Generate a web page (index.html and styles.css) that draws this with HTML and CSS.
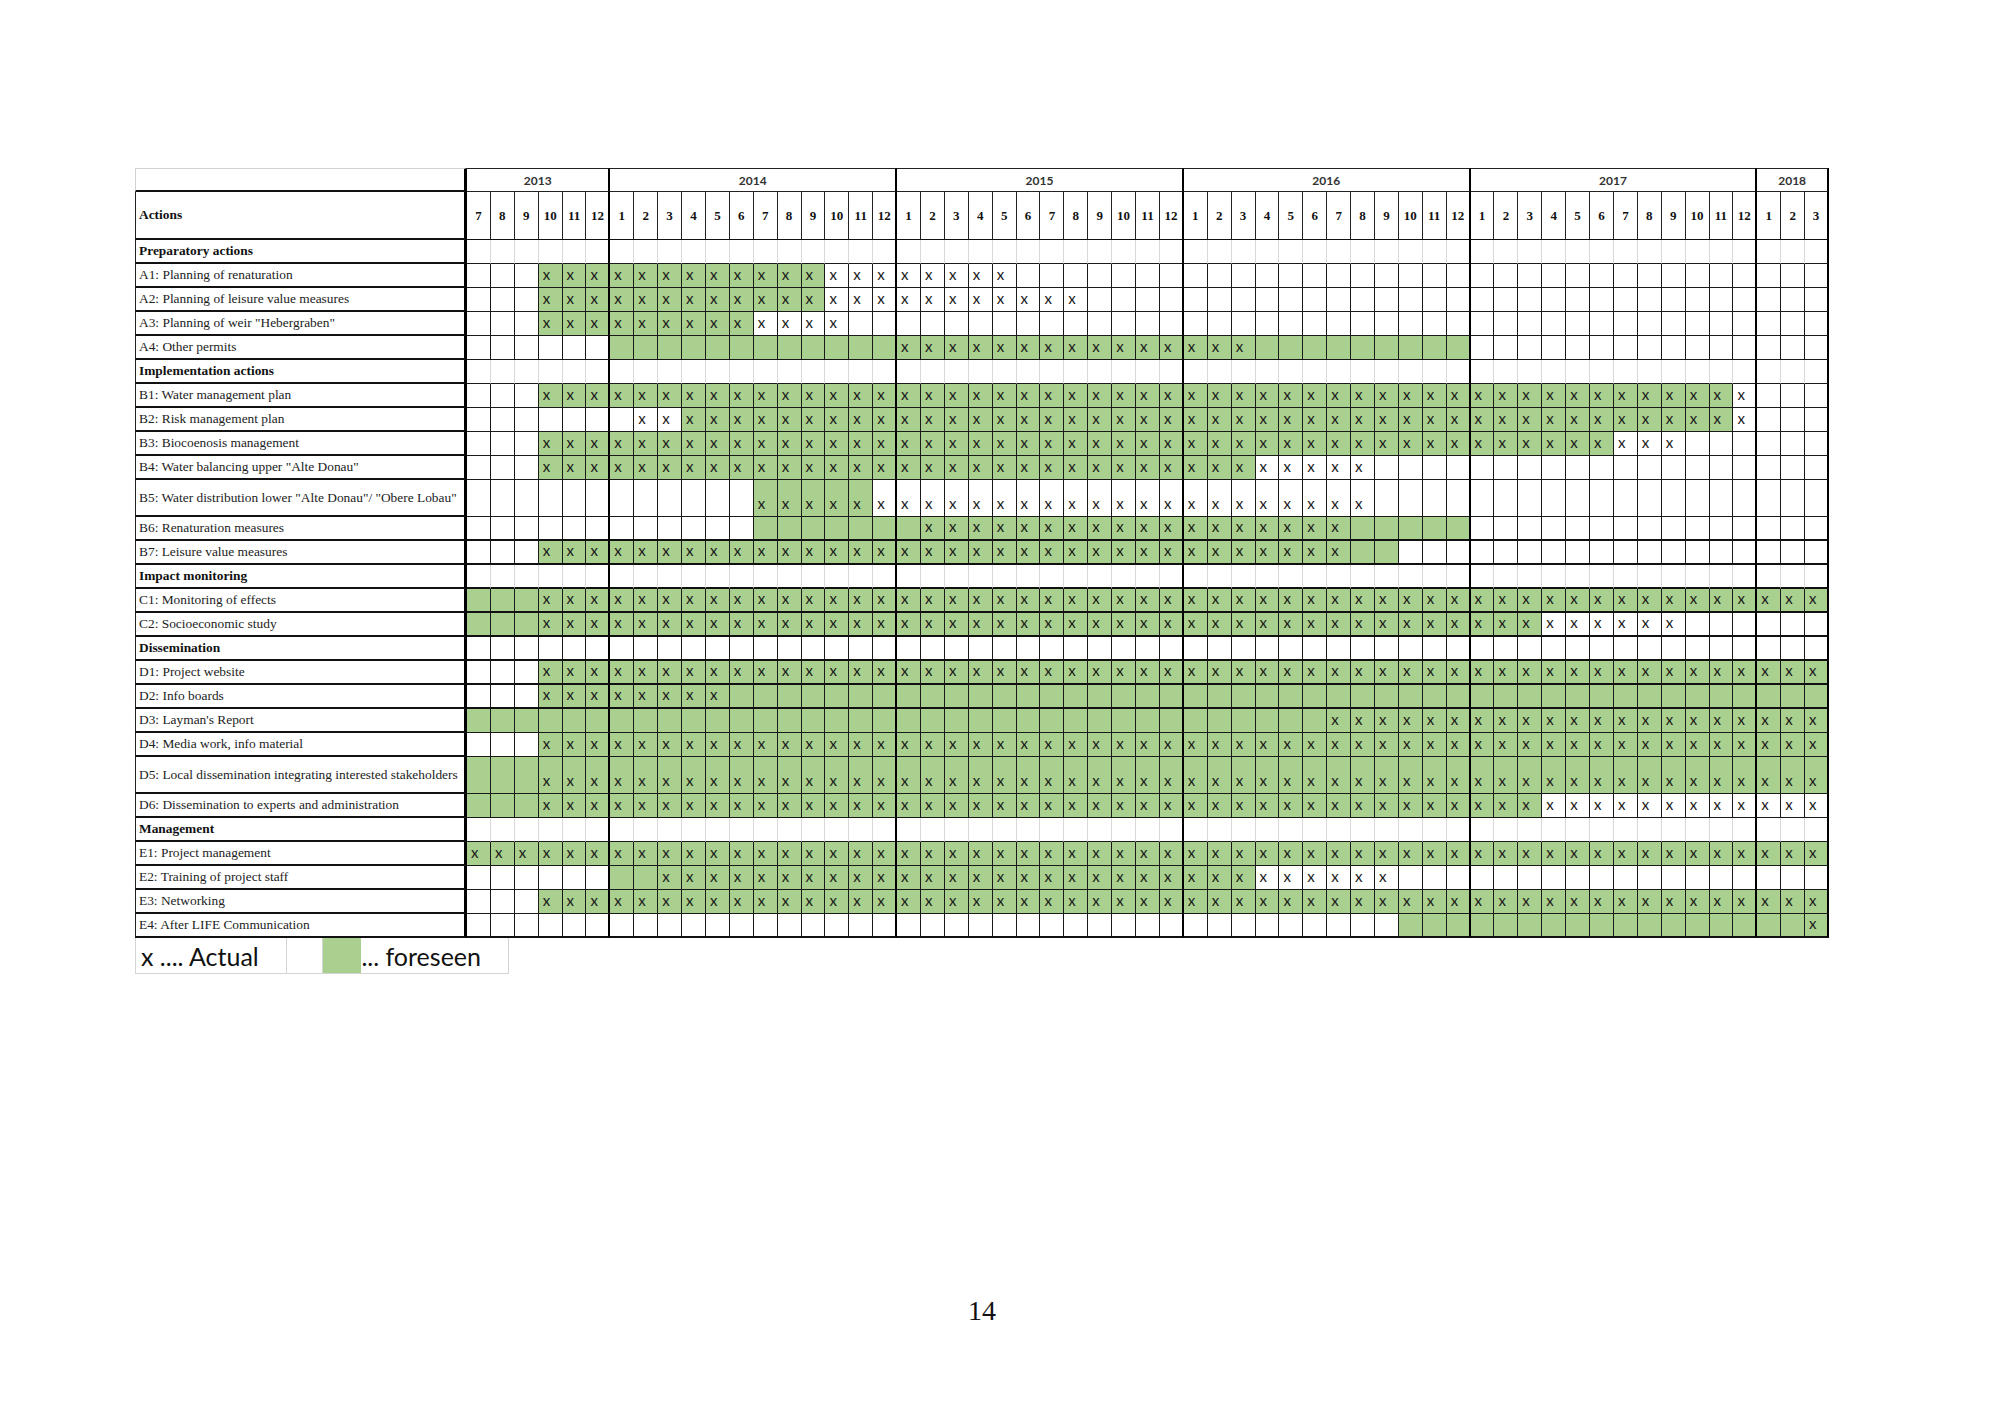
FILE: index.html
```html
<!DOCTYPE html>
<html lang="en">
<head>
<meta charset="utf-8">
<title>Time table</title>
<link rel="stylesheet" href="styles.css">
</head>
<body>
<div class="page">
  <div class="chart" id="chart">
    <div class="row hy">
      <div class="lab corner"></div>
      <div class="yr s6">2013</div>
      <div class="yr">2014</div>
      <div class="yr">2015</div>
      <div class="yr">2016</div>
      <div class="yr">2017</div>
      <div class="yr s3">2018</div>
    </div>
    <div class="row hm" id="monthRow">
      <div class="lab head">Actions</div>
    </div>
  </div>
  <div class="legend">
    <div class="lg1">x .... Actual</div>
    <div class="lg2"></div>
    <div class="lg3"></div>
    <div class="lg4">... foreseen</div>
  </div>
  <div class="pnum">14</div>
</div>
<script src="script.js"></script>
</body>
</html>
```

FILE: styles.css
```css
body {
  margin: 0;
  background: #fff;
}
.page {
  width: 2000px;
  height: 1414px;
  box-sizing: border-box;
  padding: 168px 0 0 135px;
}
.chart {
  width: 1694px;
}
.row {
  display: grid;
  grid-template-columns: 332px repeat(57, minmax(0, 1fr));
  height: 24px;
}
.row.hm {
  height: 48px;
}
.row.tall {
  height: 37px;
}
.lab {
  box-sizing: border-box;
  border-left: 1px solid #222;
  border-right: 3px solid #000;
  border-bottom: 2px solid #111;
  display: flex;
  align-items: center;
  padding-left: 3px;
  font-family: "Liberation Serif", "Times New Roman", serif;
  font-size: 13.4px;
  color: #222;
  white-space: nowrap;
  overflow: hidden;
}
.lab.corner {
  border-top: 1px solid #d2d2d2;
  border-left: 1px solid #d2d2d2;
}
.lab.head,
.sec .lab {
  font-weight: bold;
  color: #111;
}
.yr {
  grid-column: span 12;
  box-sizing: border-box;
  border-top: 1px solid #222;
  border-right: 2px solid #000;
  border-bottom: 1px solid #222;
  display: flex;
  align-items: center;
  justify-content: center;
  font-family: Lato, "Liberation Sans", sans-serif;
  font-weight: bold;
  font-size: 12px;
  color: #333;
}
.yr.s6 {
  grid-column: span 6;
}
.yr.s3 {
  grid-column: span 3;
}
.mo {
  box-sizing: border-box;
  border-right: 1px solid #222;
  border-bottom: 1px solid #111;
  display: flex;
  align-items: center;
  justify-content: center;
  font-family: "Liberation Serif", "Times New Roman", serif;
  font-weight: bold;
  font-size: 13px;
  color: #111;
}
.mo.ye {
  border-right: 2px solid #000;
}
.cell {
  box-sizing: border-box;
  border-right: 1px solid #1a1a1a;
  border-bottom: 1px solid #1a1a1a;
  display: flex;
  align-items: flex-end;
  padding: 0 0 5px 4px;
  font-family: Lato, "Liberation Sans", sans-serif;
  font-size: 15px;
  line-height: 1;
  color: #1a1a1a;
}
.cell.g {
  background: #a9d08e;
}
.cell.ye {
  border-right: 2px solid #000;
}
.thick .cell {
  border-bottom: 2px solid #111;
}
.sec .cell {
  border-right-color: #d9d9d9;
}
.sec .cell.ye {
  border-right-color: #000;
}
.sec.dk .cell {
  border-right-color: #1a1a1a;
}
.sec.dk .cell.ye {
  border-right-color: #000;
}
.legend {
  display: flex;
  width: 374px;
  height: 36px;
  box-sizing: border-box;
  border-left: 1px solid #d4d4d4;
  border-bottom: 1px solid #d4d4d4;
}
.legend div {
  box-sizing: border-box;
  border-right: 1px solid #d4d4d4;
  display: flex;
  align-items: center;
  font-family: Lato, "Liberation Sans", sans-serif;
  font-size: 25px;
  color: #111;
  white-space: nowrap;
}
.lg1 {
  width: 151px;
  padding-left: 5px;
}
.lg2 {
  width: 36px;
}
.lg3 {
  width: 39px;
  background: #a9d08e;
  border-right: none !important;
}
.lg4 {
  width: 148px;
  padding-left: 0;
}
.pnum {
  width: 1694px;
  margin-top: 321px;
  text-align: center;
  font-family: "Liberation Serif", "Times New Roman", serif;
  font-size: 28px;
  line-height: 32px;
  color: #111;
}
```

FILE: script.js
```javascript
(function () {
  var yearEnds = [5, 17, 29, 41, 53, 56];
  var months = [7, 8, 9, 10, 11, 12];
  for (var y = 0; y < 4; y++) {
    for (var m = 1; m <= 12; m++) months.push(m);
  }
  months.push(1, 2, 3);

  var monthRow = document.getElementById('monthRow');
  months.forEach(function (m, i) {
    var d = document.createElement('div');
    d.className = 'mo' + (yearEnds.indexOf(i) >= 0 ? ' ye' : '');
    d.textContent = m;
    monthRow.appendChild(d);
  });

  var rows = [
    { label: 'Preparatory actions', sec: true },
    { label: 'A1: Planning of renaturation', g: [[3, 14]], x: [[3, 22]] },
    { label: 'A2: Planning of leisure value measures', g: [[3, 14]], x: [[3, 25]] },
    { label: 'A3: Planning of weir "Hebergraben"', g: [[3, 11]], x: [[3, 15]] },
    { label: 'A4: Other permits', g: [[6, 41]], x: [[18, 32]] },
    { label: 'Implementation actions', sec: true },
    { label: 'B1: Water management plan', g: [[3, 52]], x: [[3, 53]] },
    { label: 'B2: Risk management plan', g: [[9, 52]], x: [[7, 53]] },
    { label: 'B3: Biocoenosis management', g: [[3, 47]], x: [[3, 50]] },
    { label: 'B4: Water balancing upper "Alte Donau"', g: [[3, 32]], x: [[3, 37]] },
    { label: 'B5: Water distribution lower "Alte Donau"/ "Obere Lobau"', tall: true, g: [[12, 16]], x: [[12, 37]] },
    { label: 'B6: Renaturation measures', g: [[12, 41]], x: [[19, 36]], thick: true },
    { label: 'B7: Leisure value measures', g: [[3, 38]], x: [[3, 36]], thick: true },
    { label: 'Impact monitoring', sec: true, thick: true },
    { label: 'C1: Monitoring of effects', g: [[0, 56]], x: [[3, 56]], thick: true },
    { label: 'C2: Socioeconomic study', g: [[0, 44]], x: [[3, 50]], thick: true },
    { label: 'Dissemination', sec: true, dk: true, thick: true },
    { label: 'D1: Project website', g: [[3, 56]], x: [[3, 56]], thick: true },
    { label: 'D2: Info boards', g: [[3, 56]], x: [[3, 10]], thick: true },
    { label: "D3: Layman's Report", g: [[0, 56]], x: [[36, 56]] },
    { label: 'D4: Media work, info material', g: [[3, 56]], x: [[3, 56]] },
    { label: 'D5: Local dissemination integrating interested stakeholders', tall: true, g: [[0, 56]], x: [[3, 56]] },
    { label: 'D6: Dissemination to experts and administration', g: [[0, 44]], x: [[3, 56]] },
    { label: 'Management', sec: true },
    { label: 'E1: Project management', g: [[0, 56]], x: [[0, 56]] },
    { label: 'E2: Training of project staff', g: [[6, 32]], x: [[8, 38]] },
    { label: 'E3: Networking', g: [[3, 56]], x: [[3, 56]] },
    { label: 'E4: After LIFE Communication', g: [[39, 56]], x: [[56, 56]], thick: true }
  ];

  function inRanges(ranges, i) {
    if (!ranges) return false;
    for (var k = 0; k < ranges.length; k++) {
      if (i >= ranges[k][0] && i <= ranges[k][1]) return true;
    }
    return false;
  }

  var chart = document.getElementById('chart');
  rows.forEach(function (r) {
    var row = document.createElement('div');
    var cls = 'row';
    if (r.sec) cls += ' sec';
    if (r.dk) cls += ' dk';
    if (r.tall) cls += ' tall';
    if (r.thick) cls += ' thick';
    row.className = cls;
    var lab = document.createElement('div');
    lab.className = 'lab';
    lab.textContent = r.label;
    row.appendChild(lab);
    for (var i = 0; i < 57; i++) {
      var c = document.createElement('div');
      var cc = 'cell';
      if (inRanges(r.g, i)) cc += ' g';
      if (yearEnds.indexOf(i) >= 0) cc += ' ye';
      c.className = cc;
      if (inRanges(r.x, i)) c.textContent = 'x';
      row.appendChild(c);
    }
    chart.appendChild(row);
  });
})();
```
